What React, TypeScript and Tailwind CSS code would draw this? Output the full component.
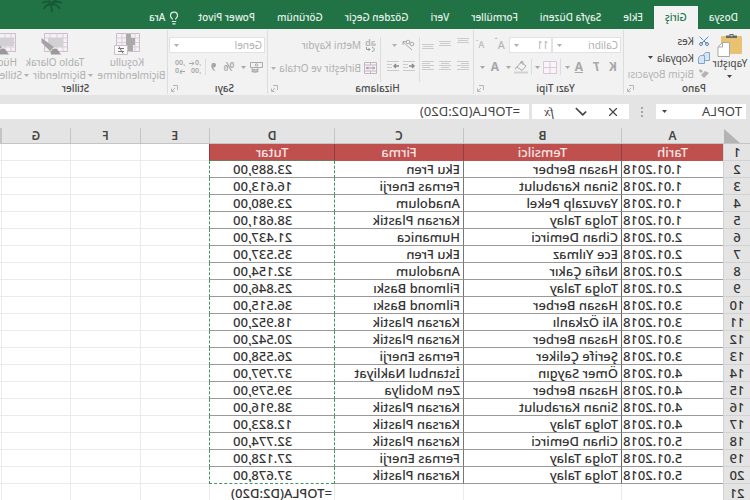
import { useState, type ReactNode } from "react";
import { Check, Lightbulb, Scissors, X } from "lucide-react";

const TABS = [
  "Dosya",
  "Giriş",
  "Ekle",
  "Sayfa Düzeni",
  "Formüller",
  "Veri",
  "Gözden Geçir",
  "Görünüm",
  "Power Pivot",
];

const COLUMNS = ["A", "B", "C", "D", "E", "F", "G", ""];

const ROWS = [
  ["1.01.2018", "Hasan Berber", "Eku Fren", "23.889,00"],
  ["1.01.2018", "Sinan Karabulut", "Fernas Enerji", "16.613,00"],
  ["1.01.2018", "Yavuzalp Pekel", "Anadolum", "23.980,00"],
  ["1.01.2018", "Tolga Talay", "Karsan Plastik", "38.681,00"],
  ["2.01.2018", "Cihan Demirci", "Humanica", "21.437,00"],
  ["2.01.2018", "Ece Yılmaz", "Eku Fren", "35.537,00"],
  ["2.01.2018", "Nafia Çakır", "Anadolum", "32.154,00"],
  ["2.01.2018", "Tolga Talay", "Filmond Baskı", "25.846,00"],
  ["3.01.2018", "Hasan Berber", "Filmond Baskı", "36.515,00"],
  ["3.01.2018", "Ali Özkanlı", "Karsan Plastik", "18.952,00"],
  ["3.01.2018", "Hasan Berber", "Karsan Plastik", "20.542,00"],
  ["3.01.2018", "Şerife Çeliker", "Fernas Enerji", "26.558,00"],
  ["4.01.2018", "Ömer Saygın", "İstanbul Nakliyat", "37.797,00"],
  ["4.01.2018", "Hasan Berber", "Zen Mobilya", "39.579,00"],
  ["4.01.2018", "Sinan Karabulut", "Karsan Plastik", "38.916,00"],
  ["4.01.2018", "Tolga Talay", "Karsan Plastik", "12.823,00"],
  ["5.01.2018", "Cihan Demirci", "Karsan Plastik", "32.774,00"],
  ["5.01.2018", "Tolga Talay", "Fernas Enerji", "27.128,00"],
  ["5.01.2018", "Tolga Talay", "Karsan Plastik", "37.678,00"],
];

function Caret() {
  return (
    <svg className="w-[5px] h-[3px] shrink-0" viewBox="0 0 5 3" fill="currentColor">
      <path d="M0 0h5L2.5 3z" />
    </svg>
  );
}

function Separator() {
  return <span className="w-px h-4 shrink-0 bg-[#dcdcdc]" />;
}

function Group({ label, width, launcher = true, children }: { label: string; width: string; launcher?: boolean; children: ReactNode }) {
  return (
    <section className={`${width} shrink-0 flex flex-col border-r border-[#dcdcdc] my-px`} aria-label={label}>
      <div className="h-[52px] shrink-0">{children}</div>
      <div className="flex items-center h-3 leading-3 text-[#4a4a4a] font-medium">
        <span className="flex-1 text-center">{label}</span>
        {launcher && (
          <button className="w-[14px] text-[#b5b5b5]" aria-label={`${label} ayarları`}>
            <svg className="w-[7px] h-[7px] ml-1" viewBox="0 0 7 7" fill="none" stroke="currentColor">
              <path d="M.5 5V.5H5M3 3l3 3M6.500 3.500v3h-3" />
            </svg>
          </button>
        )}
      </div>
    </section>
  );
}

function AlignIcon({ d }: { d: string }) {
  return (
    <svg className="w-3 h-[14px]" viewBox="0 0 12 14" fill="none" stroke="#cbcbcb">
      <path d={d} />
    </svg>
  );
}

function IndentIcon({ flip }: { flip?: boolean }) {
  return (
    <svg className="w-3 h-[10px]" viewBox="0 0 12 10" fill="none" stroke="#cbcbcb">
      <path d="M0 .5h12M7 3.500h5M7 6.500h5M0 9.500h12" />
      <path d={flip ? "M0 5h5M3 3l2 2-2 2" : "M6 5H1M3 3L1 5l2 2"} stroke="#8c8c8c" strokeWidth="1.4" />
    </svg>
  );
}

function Clipboard() {
  return (
    <svg className="w-[26px] h-6" viewBox="0 0 26 24">
      <rect x="1" y="3" width="21" height="18" rx="1" fill="#e9c173" />
      <path d="M6 5V2.500h3.500V1h4v1.500H17V5z" fill="#666" />
      <rect x="10.500" y="2" width="2" height="1.300" fill="#ddd" />
      <path d="M13.500 9.500h7l4.500 4.500v9.500H13.500z" fill="#fff" stroke="#a9a9a9" />
      <path d="M20.500 9.500V14H25" fill="none" stroke="#a9a9a9" />
    </svg>
  );
}

function GridIcon({ kind }: { kind: "conditional" | "table" | "cell" }) {
  return (
    <svg className="w-7 h-6" viewBox="0 0 28 24" fill="none">
      <path d="M1.500 1.500h23v18h-23z" fill="#f6f0f6" stroke="#c9bfc9" />
      <path d="M1.500 6h23M1.500 10.500h23M1.500 15h23M6 1.500v18M12 1.500v18M19 1.500v18" stroke="#d9cfd9" />
      {kind === "conditional" && (
        <>
          <path d="M6 6h4V2h5v17H8v-6H6z" fill="#aaa" />
          <path d="M13.500 13.500h13v9h-13z" fill="#fafafa" stroke="#c9bfc9" />
          <path d="M17 16.500h6M17 19.500h6M22 14.500l-4 7" stroke="#777" />
        </>
      )}
      {kind === "table" && <path d="M6 6h15v9H6z" fill="#d3d0d3" />}
      {kind === "cell" && <path d="M3 6h19v8H3z" fill="#d3d0d3" />}
      {kind !== "conditional" && (
        <>
          <path d="M27.500 6v4.500L19 19l-4-4z" fill="#a4a4a4" />
          <path d="M7 22.500c3 0 3-6 7-6 3 0 5 3 4 6z" fill="#999" />
        </>
      )}
    </svg>
  );
}

function DecimalIcon({ less }: { less?: boolean }) {
  return (
    <span className="relative flex flex-col w-3 text-[7px] leading-[8px] font-semibold text-left">
      <span>{less ? ",00" : ",0"}</span>
      <span className={less ? "pl-1" : ""}>{less ? ",0" : ",00"}</span>
      <svg className={less ? "absolute left-0 top-[10px] w-[5px] h-[5px]" : "absolute right-0 top-[2px] w-[5px] h-[5px]"} viewBox="0 0 5 5" fill="none" stroke="currentColor">
        <path d={less ? "M0 2.500h5M3 .5l2 2-2 2" : "M5 2.500H0M2 .5l-2 2 2 2"} />
      </svg>
    </span>
  );
}

function Picker({ label, value, width }: { label: string; value: string; width: string }) {
  return (
    <label className={`${width} relative flex items-center h-4 bg-white border border-[#e2e2e2]`}>
      <select className="appearance-none w-full h-[14px] pl-[2px] leading-[14px] outline-none" aria-label={label} defaultValue={value}>
        <option>{value}</option>
      </select>
      <span className="absolute right-1 pointer-events-none">
        <Caret />
      </span>
    </label>
  );
}

function Pano() {
  return (
    <Group label="Pano" width="w-[127px]">
      <div className="flex pt-[3px] text-[#444]">
        <button className="w-[40px] flex flex-col items-center leading-[13px]">
          <Clipboard />
          <span>Yapıştır</span>
          <span className="h-3 flex items-center">
            <Caret />
          </span>
        </button>
        <div className="flex flex-col items-start leading-4">
          <button className="flex items-center gap-1 h-4">
            <Scissors className="w-3 h-3 -rotate-90 text-[#5385b8]" />
            Kes
          </button>
          <button className="flex items-center gap-1 h-[17px]">
            <svg className="w-3 h-3" viewBox="0 0 12 12" fill="#d5e5f5" stroke="#86a4c4">
              <path d="M.5.5h4l2 2v6h-6z" />
              <path d="M5.500 3.500h4l2 2v6h-6z" />
            </svg>
            Kopyala
            <Caret />
          </button>
          <button className="flex items-center gap-1 h-4 text-[#b3b3b3] whitespace-nowrap">
            <svg className="w-3 h-3" viewBox="0 0 12 12" fill="#b9b0b9">
              <path d="M1 5l4-2 4 4-3 3zM7 3l3-2 1 2-2 2z" />
            </svg>
            Biçim Boyacısı
          </button>
        </div>
      </div>
    </Group>
  );
}

function YaziTipi() {
  return (
    <Group label="Yazı Tipi" width="w-[150px]">
      <div className="flex pl-[2px] pt-[7px]">
        <Picker label="Yazı tipi" value="Calibri" width="w-[71px]" />
        <Picker label="Boyut" value="11" width="w-[43px]" />
        <button className="ml-1 w-3 text-[11px] leading-4" aria-label="Yazı tipini büyüt">A<sup>ˆ</sup></button>
        <button className="ml-2 w-3 text-[9px] leading-4" aria-label="Yazı tipini küçült">A<sup>ˇ</sup></button>
      </div>
      <div className="flex items-center h-[18px] mt-[5px] pl-[6px] text-[12px] font-bold text-[#a8a8a8]">
        <button className="w-[17px] text-left">K</button>
        <button className="w-[17px] text-left italic">T</button>
        <button className="w-[13px] text-left underline">A</button>
        <Caret />
        <span className="w-1" />
        <Separator />
        <button className="flex items-center gap-[3px] mx-[3px]" aria-label="Kenarlıklar">
          <svg className="w-[14px] h-[13px]" viewBox="0 0 14 13" fill="#faf4fa" stroke="#d8c8d8">
            <path d="M.5.5h13v12H.5zM7 .5v12M.5 6.500h13" />
          </svg>
          <Caret />
        </button>
        <Separator />
        <button className="flex items-center gap-[3px] mx-[3px]" aria-label="Dolgu rengi">
          <svg className="w-[14px] h-[14px]" viewBox="0 0 14 14" fill="none" stroke="#ababab">
            <path d="M2 6l5-4 4 5-5 3.500zM5 5V1.500h2V4M11.500 6.500l1 3" />
            <path d="M0 12.500h14" stroke="#d6d0d6" strokeWidth="2" />
          </svg>
          <Caret />
        </button>
        <button className="flex items-center gap-[6px] ml-1" aria-label="Yazı rengi">
          A
          <Caret />
        </button>
      </div>
    </Group>
  );
}

function Hizalama() {
  return (
    <Group label="Hizalama" width="w-[206px]">
      <div className="flex h-full pt-[7px]">
        <div className="grid grid-cols-3 gap-x-1 gap-y-2 w-[54px] pl-1 content-start border-r border-[#dcdcdc]">
          <AlignIcon d="M0 1.500h12M1 3.500h10M0 5.500h12" />
          <AlignIcon d="M0 4.500h12M1 6.500h10M0 8.500h12" />
          <AlignIcon d="M0 7.500h12M1 9.500h10M0 11.500h12" />
          <AlignIcon d="M0 2.500h12M0 4.500h8M0 6.500h12M0 8.500h8M0 10.500h12" />
          <AlignIcon d="M0 2.500h12M2 4.500h8M0 6.500h12M2 8.500h8M0 10.500h12" />
          <AlignIcon d="M0 2.500h12M4 4.500h8M0 6.500h12M4 8.500h8M0 10.500h12" />
        </div>
        <div className="w-[39px] pl-1 border-r border-[#dcdcdc]">
          <button className="flex items-center gap-1 h-4" aria-label="Yönlendirme">
            <svg className="w-[14px] h-3" viewBox="0 0 14 12" fill="none" stroke="#aaa">
              <path d="M3 11l9-8M8.500 2.500H12V6" />
              <circle cx="3" cy="5" r="1.800" />
              <circle cx="7" cy="3" r="1.800" />
            </svg>
            <Caret />
          </button>
          <div className="flex items-center gap-1 h-[18px] mt-1">
            <IndentIcon />
            <IndentIcon flip />
          </div>
        </div>
        <div className="pl-[3px] whitespace-nowrap">
          <button className="flex items-center gap-[3px] h-4">
            <span className="w-[13px] flex flex-col items-center text-[9px] leading-[9px] font-semibold">
              ab
              <svg className="w-[9px] h-[5px]" viewBox="0 0 9 5" fill="none" stroke="#999">
                <path d="M3 .5C0 .5 0 4.500 3 4.500M8.500 0v2.500H5M6.500 1L5 2.500 6.500 4" />
              </svg>
            </span>
            Metni Kaydır
          </button>
          <button className="flex items-center gap-[3px] h-[18px] mt-[6px]">
            <svg className="w-[13px] h-3" viewBox="0 0 13 12" fill="#f8f2f8" stroke="#c3b4c3">
              <path d="M.5.5h12v11H.5zM.5 3h12M.5 9h12M6.500 0v3M6.500 9v3" />
              <path d="M2 6h9M4 4.500L2.500 6 4 7.500M9 4.500L10.500 6 9 7.500" stroke="#999" />
            </svg>
            Birleştir ve Ortala
            <Caret />
          </button>
        </div>
      </div>
    </Group>
  );
}

function Sayi() {
  return (
    <Group label="Sayı" width="w-[100px]">
      <div className="pl-[2px] pt-[7px]">
        <Picker label="Sayı biçimi" value="Genel" width="w-[96px]" />
      </div>
      <div className="flex items-center h-[18px] mt-[5px] pl-1 text-[#a8a8a8]">
        <button className="flex items-center gap-1" aria-label="Para birimi">
          <svg className="w-[13px] h-3" viewBox="0 0 13 12" fill="none" stroke="#aaa">
            <path d="M.5 1.500h12v5H.5z" />
            <circle cx="6.500" cy="4" r="1.200" />
            <path d="M5 7.500c0 2 6 2 6 0M5 9.500c0 2 6 2 6 0" strokeWidth="1.500" />
          </svg>
          <Caret />
        </button>
        <button className="ml-1 w-4 text-[13px] font-medium">%</button>
        <button className="w-[15px] flex justify-center" aria-label="Binlik ayırıcı">
          <svg className="w-[5px] h-2" viewBox="0 0 5 8" fill="currentColor">
            <path d="M0 2.200a2.200 2.200 0 0 1 4.600-.2C5 5 3.500 7 1 8l-.4-.8C2 6.500 2.600 5.500 2.600 4.400 1 4.600 0 3.700 0 2.200z" />
          </svg>
        </button>
        <Separator />
        <button className="ml-1 mr-1" aria-label="Ondalık artır"><DecimalIcon /></button>
        <button aria-label="Ondalık azalt"><DecimalIcon less /></button>
      </div>
    </Group>
  );
}

function StyleButton({ kind, first, second, className }: { kind: "conditional" | "table" | "cell"; first: string; second: string; className: string }) {
  return (
    <button className={`${className} shrink-0 flex flex-col items-center pt-[2px] leading-[13px] whitespace-nowrap`}>
      <GridIcon kind={kind} />
      <span>{first}</span>
      <span className="flex items-center gap-1">
        {second}
        <Caret />
      </span>
    </button>
  );
}

export default function App() {
  const [formula, setFormula] = useState("=TOPLA(D2:D20)");

  return (
    // The whole window is shown as a mirror image
    <main className="h-screen overflow-hidden flex flex-col -scale-x-100 bg-white font-['Noto_Sans','Open_Sans',sans-serif] text-[10px]">

      {/* Tab strip */}
      <header className="relative h-[29px] shrink-0 flex items-end pl-px bg-[#217346] text-[#e6f1ea]">
        {TABS.map((tab) => (
          <button
            key={tab}
            className={
              tab === "Giriş"
                ? "h-[23px] px-[11px] leading-[23px] bg-[#f3f3f3] text-[#217346] font-medium whitespace-nowrap"
                : "h-[23px] px-[11px] leading-[23px] font-medium whitespace-nowrap"
            }
          >
            {tab}
          </button>
        ))}
        <button className="h-[23px] pl-[6px] flex items-center gap-[2px] font-medium">
          <Lightbulb className="w-[14px] h-[14px]" />
          Ara
        </button>
        <svg className="absolute left-[687px] top-0 w-[22px] h-3" viewBox="0 0 22 12" fill="none" stroke="#165a35" strokeWidth="1.800">
          <path d="M11 12C11 8 12 4 14 0M12 5C9 2 5 1 1 3M12 5c-4-1-7 0-9 4M12 4c3-3 6-3 9-1M12 5c4-1 6 1 7 4M12 4C10 2 8 0 6 0" />
        </svg>
      </header>

      {/* Ribbon */}
      <div className="h-[66px] shrink-0 flex overflow-hidden bg-[#f2f2f2] text-[#b0b0b0]">
        <Pano />
        <YaziTipi />
        <Hizalama />
        <Sayi />
        <Group label="Stiller" width="w-[184px]" launcher={false}>
          <div className="flex">
            <StyleButton kind="conditional" first="Koşullu" second="Biçimlendirme" className="w-[80px]" />
            <StyleButton kind="table" first="Tablo Olarak" second="Biçimlendir" className="w-[64px]" />
            <StyleButton kind="cell" first="Hücre" second="Stilleri" className="w-[40px]" />
          </div>
        </Group>
      </div>

      {/* Formula bar */}
      <div className="h-[33px] shrink-0 flex items-start pt-[9px] pl-1 bg-[#e4e4e4] text-[12px] text-[#444]">
        <label className="relative w-[90px] h-[15px] flex items-center bg-white">
          <input aria-label="Ad kutusu" className="w-full pl-1 text-[13px] leading-[15px] outline-none" defaultValue="TOPLA" />
          <span className="absolute right-[6px]">
            <Caret />
          </span>
        </label>
        <span className="w-[27px] h-[15px] flex flex-col items-center justify-center gap-[2px]">
          <span className="w-[2px] h-[2px] bg-[#a5a5a5]" />
          <span className="w-[2px] h-[2px] bg-[#a5a5a5]" />
          <span className="w-[2px] h-[2px] bg-[#a5a5a5]" />
        </span>
        <div className="w-[97px] h-[15px] flex items-center bg-white">
          <button className="w-8 flex justify-center" aria-label="İptal">
            <X className="w-4 h-[14px]" />
          </button>
          <button className="w-8 flex justify-center" aria-label="Gir">
            <Check className="w-[14px] h-[14px]" strokeWidth={3} />
          </button>
          <button className="w-8 font-['Liberation_Serif',serif] italic text-[13px] leading-[15px]">fx</button>
        </div>
        <input
          aria-label="Formül çubuğu"
          className="flex-1 min-w-0 h-[15px] ml-[3px] pl-[9px] bg-white text-[13px] leading-[15px] outline-none"
          value={formula}
          onChange={(e) => setFormula(e.target.value)}
        />
      </div>

      {/* Sheet */}
      <table className="w-full table-fixed border-separate border-spacing-0 text-[13px] leading-4 text-[#333]">
        <colgroup>
          <col className="w-[27px]" />
          <col className="w-[102px]" />
          <col className="w-[158px]" />
          <col className="w-[129px]" />
          <col className="w-[125px]" />
          <col className="w-[69px]" />
          <col className="w-[70px]" />
          <col className="w-[69px]" />
          <col />
        </colgroup>
        <thead>
          <tr className="bg-[#e4e4e4] text-[12px]">
            <th className="h-4 p-0 pl-[10px] border-b border-[#c4c4c4]" aria-label="Tümünü seç">
              <svg className="w-4 h-[14px]" viewBox="0 0 16 14" fill="#b4b4b4">
                <path d="M16 0v14H0z" />
              </svg>
            </th>
            {COLUMNS.map((c) => (
              <th key={c} className="h-4 p-0 leading-[15px] font-semibold border-r border-b border-[#c4c4c4] text-[#444]">{c}</th>
            ))}
          </tr>
        </thead>
        <tbody>
          <tr>
            <th className="h-[17px] p-0 bg-[#e4e4e4] border-r border-b border-[#d2d2d2] font-medium">1</th>
            {["Tarih", "Temsilci", "Firma", "Tutar"].map((t) => (
              <th
                key={t}
                className={
                  t === "Tutar"
                    ? "h-[17px] p-0 bg-[#c0504d] border-r border-b border-r-[#8f3f3d] border-b-[#3f9767] [border-bottom-style:dashed] text-[#f6e6e5] font-medium"
                    : "h-[17px] p-0 bg-[#c0504d] border-r border-b border-r-[#8f3f3d] border-b-[#b85552] text-[#f6e6e5] font-medium"
                }
              >
                {t}
              </th>
            ))}
            <td className="border-r border-b border-[#ebebeb]" />
            <td className="border-r border-b border-[#ebebeb]" />
            <td className="border-r border-b border-[#ebebeb]" />
            <td className="border-b border-[#ebebeb]" />
          </tr>
          {ROWS.map(([date, rep, firm, amount], i) => (
            <tr key={i} className="font-medium">
              <th className="h-[17px] p-0 bg-[#e4e4e4] border-r border-b border-[#d2d2d2] font-medium">{i + 2}</th>
              <td className="h-[17px] p-0 pr-px text-right border-r border-b border-r-[#666] border-b-[#999]">{date}</td>
              <td className="p-0 pl-[3px] border-r border-b border-r-[#777] border-b-[#999] whitespace-nowrap">{rep}</td>
              <td className="p-0 pl-[3px] border-r border-b border-b-[#999] border-r-[#3f9767] [border-right-style:dashed] whitespace-nowrap">{firm}</td>
              <td
                className={
                  i === ROWS.length - 1
                    ? "p-0 pr-[23px] text-right border-r border-b border-dashed border-[#3f9767]"
                    : "p-0 pr-[23px] text-right border-r border-b border-b-[#999] border-r-[#3f9767] [border-right-style:dashed]"
                }
              >
                {amount}
              </td>
              <td className="border-r border-b border-[#ebebeb]" />
              <td className="border-r border-b border-[#ebebeb]" />
              <td className="border-r border-b border-[#ebebeb]" />
              <td className="border-b border-[#ebebeb]" />
            </tr>
          ))}
          <tr className="font-medium">
            <th className="h-[17px] p-0 bg-[#e4e4e4] border-r border-[#d2d2d2] font-medium">21</th>
            <td className="border-r border-[#ebebeb]" />
            <td className="border-r border-[#ebebeb]" />
            <td className="border-r border-[#ebebeb]" />
            <td className="p-0 border-r border-[#ebebeb]">
              <input
                aria-label="D21"
                className="block w-full h-4 pl-[2px] leading-4 outline-none"
                value={formula}
                onChange={(e) => setFormula(e.target.value)}
              />
            </td>
            <td className="border-r border-[#ebebeb]" />
            <td className="border-r border-[#ebebeb]" />
            <td className="border-r border-[#ebebeb]" />
            <td />
          </tr>
        </tbody>
      </table>
    </main>
  );
}
